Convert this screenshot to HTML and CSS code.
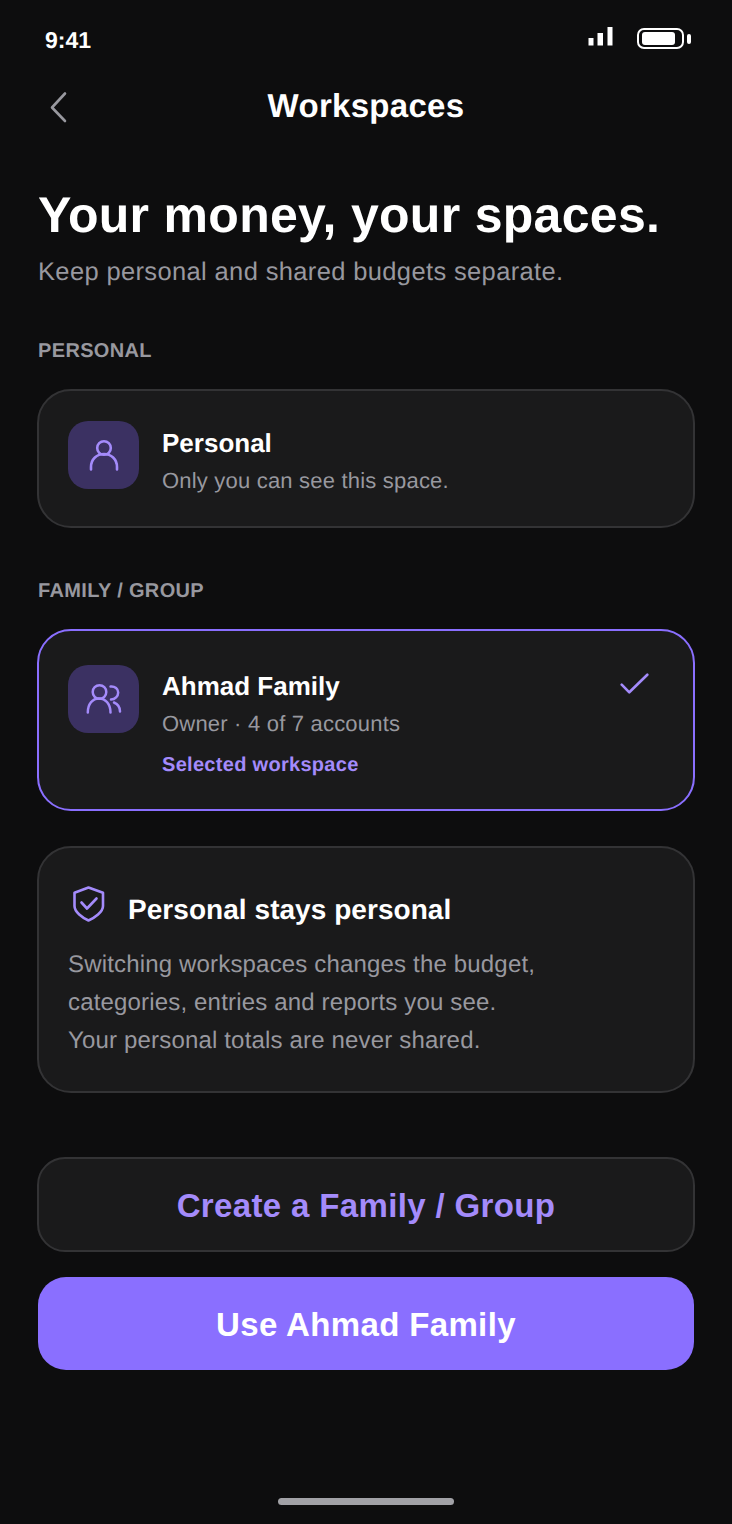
FILE: index.html
```html
<!DOCTYPE html>
<html lang="en">
<head>
    <meta charset="UTF-8">
    <meta name="viewport" content="width=device-width, initial-scale=1.0">
    <title>Workspaces</title>
    <link rel="stylesheet" href="styles.css">
</head>
<body>
    <div class="screen">
        <!-- Status bar -->
        <div class="status-bar">
            <span class="time">9:41</span>
            <div class="status-icons">
                <svg class="signal" width="25" height="19" viewBox="0 0 25 19" fill="#fff">
                    <rect x="0.500" y="11" width="5" height="7.500"/>
                    <rect x="9.500" y="6" width="5.500" height="12.500"/>
                    <rect x="19.500" y="0" width="5" height="18.500"/>
                </svg>
                <div class="battery"><div class="battery-fill"></div></div>
                <div class="battery-cap"></div>
            </div>
        </div>

        <!-- Header -->
        <div class="nav-bar">
            <svg class="back" width="20" height="32" viewBox="0 0 20 32" fill="none" stroke="#98989f" stroke-width="2.600" stroke-linecap="round" stroke-linejoin="round">
                <path d="M17 2.500 L4 16.500 L17 30"/>
            </svg>
            <h2>Workspaces</h2>
        </div>

        <h1>Your money, your spaces.</h1>
        <p class="subtitle">Keep personal and shared budgets separate.</p>

        <div class="section-label label-personal">PERSONAL</div>
        <div class="card row-card card-personal">
            <div class="icon-box">
                <svg width="32" height="32" viewBox="0 0 32 32" fill="none" stroke="#a48bfb" stroke-width="2.600" stroke-linecap="round">
                    <circle cx="16" cy="9" r="6.800"/>
                    <path d="M3 30.500 V28 C3 20 9 15 16 15 C23 15 29 20 29 28 V30.500"/>
                </svg>
            </div>
            <div class="row-text">
                <div class="row-title">Personal</div>
                <div class="row-sub">Only you can see this space.</div>
            </div>
        </div>

        <div class="section-label label-family">FAMILY / GROUP</div>
        <div class="card row-card card-family">
            <div class="icon-box">
                <svg width="36" height="32" viewBox="0 0 36 32" fill="none" stroke="#a48bfb" stroke-width="2.500" stroke-linecap="round">
                    <circle cx="13.500" cy="9" r="6.800"/>
                    <path d="M1.800 29.500 C1.800 21 6.500 15.500 13 15.500 C19.500 15.500 24.500 21 24.500 29.500"/>
                    <path d="M24.500 3.500 C29 3 32.200 6 32.200 9.500 C32.200 13 29 16.500 25 16.500"/>
                    <path d="M28 19.500 C31.500 21 34 24.500 34 28.500"/>
                </svg>
            </div>
            <div class="row-text">
                <div class="row-title">Ahmad Family</div>
                <div class="row-sub">Owner · 4 of 7 accounts</div>
                <div class="row-selected">Selected workspace</div>
            </div>
            <svg class="check" width="30" height="22" viewBox="0 0 30 22" fill="none" stroke="#a48bfb" stroke-width="2.600" stroke-linecap="round" stroke-linejoin="round">
                <path d="M2.700 11.700 L10.300 19.300 L28.300 1.700"/>
            </svg>
        </div>

        <div class="card info-card">
            <div class="info-head">
                <svg width="32" height="36" viewBox="0 0 32 36" fill="none" stroke="#a48bfb" stroke-width="2.600" stroke-linecap="round" stroke-linejoin="round">
                    <path d="M15.500 1.500 L30 6.800 V20 C30 26 21.500 32 15.500 34.500 C9.500 32 1.500 26 1.500 20 V6.800 Z"/>
                    <path d="M8.500 16.500 L14 22.500 L23.500 12.500"/>
                </svg>
                <div class="info-title">Personal stays personal</div>
            </div>
            <p class="info-body">Switching workspaces changes the budget,<br>categories, entries and reports you see.<br>Your personal totals are never shared.</p>
        </div>

        <button class="btn btn-secondary">Create a Family / Group</button>
        <button class="btn btn-primary">Use Ahmad Family</button>

        <div class="home-indicator"></div>
    </div>
</body>
</html>
```

FILE: styles.css
```css
* {
    box-sizing: border-box;
}

body {
    margin: 0;
    background: #0d0d0e;
    color: #fff;
    font-family: 'Liberation Sans', Arial, sans-serif;
    text-rendering: geometricPrecision;
}

.screen {
    width: 732px;
    height: 1524px;
    padding: 0 37px;
    display: flex;
    flex-direction: column;
    overflow: hidden;
}

/* Status bar */
.status-bar {
    height: 58px;
    padding: 28px 4px 0 8px;
    display: flex;
    justify-content: space-between;
    align-items: flex-start;
}

.time {
    margin-top: -1px;
    font-size: 23px;
    font-weight: 700;
    line-height: 26px;
}

.status-icons {
    display: flex;
    align-items: center;
}

.signal {
    margin-right: 24px;
    margin-top: -5px;
}

.battery {
    width: 47px;
    height: 21px;
    border: 2px solid #fff;
    border-radius: 7px;
    padding: 2px 7px 2px 3px;
}

.battery-fill {
    width: 100%;
    height: 100%;
    background: #fff;
    border-radius: 3px;
}

.battery-cap {
    width: 4px;
    height: 10px;
    margin-left: 3px;
    background: #fff;
    border-radius: 2px;
}

/* Header */
.nav-bar {
    position: relative;
    height: 48px;
    display: flex;
    align-items: center;
    justify-content: center;
    margin-top: 24px;
}

.nav-bar h2 {
    margin: 0;
    font-size: 33px;
    font-weight: 700;
    letter-spacing: 0.3px;
}

.back {
    position: absolute;
    left: 11px;
    top: 9px;
}

h1 {
    margin: 56px 0 0 1px;
    font-size: 50px;
    line-height: 58px;
    font-weight: 700;
    letter-spacing: 0.3px;
}

.subtitle {
    margin: 13px 0 0 1px;
    font-size: 25.500px;
    line-height: 30px;
    letter-spacing: 0.36px;
    color: #98989f;
}

.section-label {
    margin-left: 1px;
    font-size: 20px;
    line-height: 24px;
    font-weight: 700;
    letter-spacing: 0.35px;
    color: #98989f;
}

.label-personal {
    margin-top: 52px;
}

.label-family {
    margin-top: 51px;
}

.card {
    background: #1a1a1b;
    border: 2px solid #333335;
    border-radius: 34px;
}

.row-card {
    display: flex;
    align-items: flex-start;
    padding: 30px 29px;
}

.card-personal {
    height: 139px;
    margin-top: 26px;
}

.card-family {
    height: 182px;
    margin-top: 26px;
    border-color: #8a6fff;
    padding-top: 34px;
}

.icon-box {
    width: 71px;
    height: 68px;
    flex-shrink: 0;
    background: #3b3162;
    border-radius: 20px;
    display: flex;
    align-items: center;
    justify-content: center;
}

.row-text {
    margin-left: 23px;
    flex: 1;
}

.row-title {
    font-size: 26px;
    line-height: 32px;
    font-weight: 700;
    margin-top: 6px;
}

.card-family .row-title {
    margin-top: 5px;
}

.row-sub {
    margin-top: 9px;
    font-size: 22px;
    line-height: 26px;
    letter-spacing: 0.2px;
    color: #98989f;
}

.row-selected {
    margin-top: 16px;
    font-size: 20px;
    line-height: 24px;
    font-weight: 700;
    letter-spacing: 0.3px;
    color: #a48bfb;
}

.check {
    margin: 8px 15px 0 0;
}

.info-card {
    height: 247px;
    margin-top: 35px;
    padding: 38px 29px 0;
}

.info-head {
    display: flex;
    align-items: flex-start;
    gap: 23px;
    height: 40px;
    margin-left: 5px;
}

.info-title {
    margin-top: 8px;
    font-size: 28px;
    font-weight: 700;
    letter-spacing: 0.05px;
}

.info-body {
    margin: 20px 0 0;
    font-size: 24px;
    line-height: 38px;
    letter-spacing: 0.17px;
    color: #98989f;
}

.btn {
    display: block;
    width: 100%;
    padding: 2px 0 0;
    font-family: inherit;
    font-size: 33px;
    font-weight: 700;
    letter-spacing: 0.36px;
    border-radius: 28px;
    cursor: pointer;
}

.btn-secondary {
    height: 95px;
    margin-top: 64px;
    background: #1a1a1b;
    border: 2px solid #333335;
    color: #a48bfb;
}

.btn-primary {
    width: 656px;
    height: 93px;
    margin: 25px 0 0 1px;
    background: #8a6fff;
    border: none;
    color: #fff;
}

.home-indicator {
    width: 176px;
    height: 7px;
    margin: 128px auto 0;
    background: #a1a1a6;
    border-radius: 4px;
}
```
